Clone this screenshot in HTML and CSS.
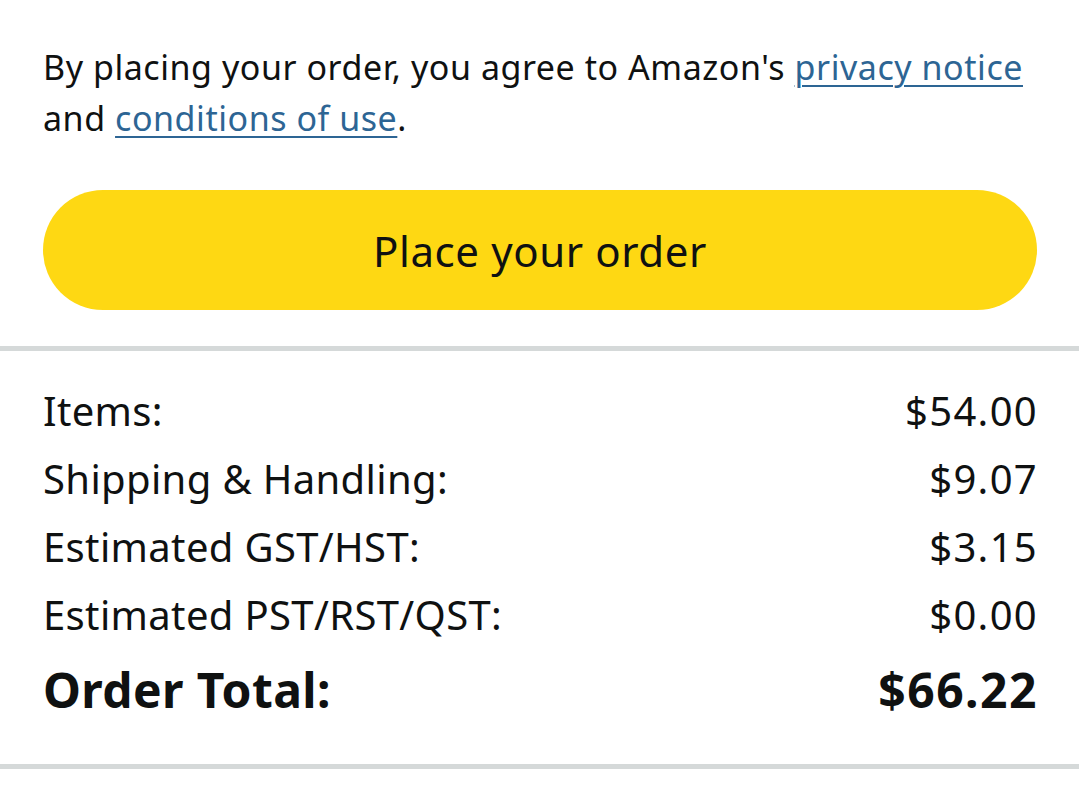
FILE: index.html
```html
<!DOCTYPE html>
<html lang="en">
<head>
<meta charset="utf-8">
<title>Place your order</title>
<link rel="stylesheet" href="styles.css">
</head>
<body>
<div class="page">
  <section class="terms">
    <p class="notice">By placing your order, you agree to Amazon's <a href="#">privacy notice</a> and <a href="#">conditions of use</a>.</p>
    <button class="place-btn" type="button">Place your order</button>
  </section>
  <hr class="divider">
  <section class="summary">
    <div class="row"><span class="label">Items:</span><span class="amount">$54.00</span></div>
    <div class="row"><span class="label">Shipping &amp; Handling:</span><span class="amount">$9.07</span></div>
    <div class="row"><span class="label">Estimated GST/HST:</span><span class="amount">$3.15</span></div>
    <div class="row"><span class="label">Estimated PST/RST/QST:</span><span class="amount">$0.00</span></div>
    <div class="row total"><span class="label">Order Total:</span><span class="amount">$66.22</span></div>
  </section>
  <hr class="divider">
</div>
</body>
</html>
```

FILE: styles.css
```css
html, body {
  margin: 0;
  padding: 0;
  background: #ffffff;
}

body {
  font-family: "Noto Sans", "Open Sans", sans-serif;
  color: #0f1111;
}

.page {
  display: flex;
  flex-direction: column;
}

.terms {
  padding: 42px 42px 36px 43px;
  display: flex;
  flex-direction: column;
  gap: 46px;
}

.notice {
  margin: 0;
  font-size: 34px;
  line-height: 51px;
  letter-spacing: 0.55px;
}

.notice a {
  color: #2d6594;
  text-decoration: underline;
  text-underline-offset: 5px;
  text-decoration-thickness: 2px;
}

.place-btn {
  height: 120px;
  border: none;
  border-radius: 60px;
  background: #fed813;
  color: #0f1111;
  font-family: inherit;
  font-size: 42px;
  letter-spacing: 0.6px;
  padding: 0;
  cursor: pointer;
}

.divider {
  margin: 0;
  border: none;
  height: 5px;
  background: #d5d9d9;
}

.summary {
  padding: 26px 42px 36px 43px;
  display: flex;
  flex-direction: column;
}

.row {
  display: flex;
  justify-content: space-between;
  font-size: 40px;
  line-height: 68px;
}

.row .label {
  letter-spacing: 0.35px;
}

.row .amount {
  letter-spacing: 1.3px;
  margin-right: -1px;
}

.row.total {
  font-weight: 700;
  font-size: 48px;
  line-height: 76px;
  margin-top: 3px;
}

.row.total .label {
  letter-spacing: 0.4px;
}

.row.total .amount {
  letter-spacing: 1.5px;
}
```
